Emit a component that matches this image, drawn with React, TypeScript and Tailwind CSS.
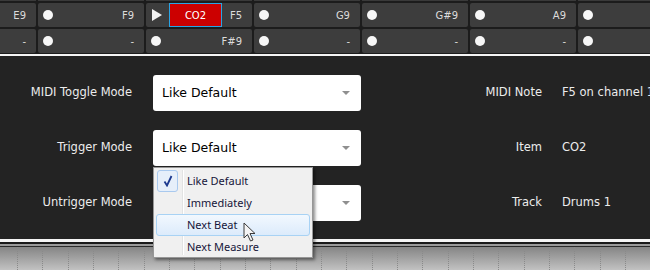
import { ReactNode } from "react";

type Cell = { dot?: "circle" | "play"; label?: string; clip?: boolean; tag?: string };

const row1: Cell[] = [
  { label: "E9" },
  { dot: "circle", label: "F9" },
  { dot: "play", tag: "CO2", label: "F5" },
  { dot: "circle", label: "G9" },
  { dot: "circle", label: "G#9" },
  { dot: "circle", label: "A9" },
  { dot: "circle" },
];

const row2: Cell[] = [
  { label: "-" },
  { dot: "circle", label: "-" },
  { dot: "circle", label: "F#9" },
  { dot: "circle", label: "-" },
  { dot: "circle", label: "-" },
  { dot: "circle", label: "-" },
  { dot: "circle" },
];

function Dot() {
  return <span className="block w-[10px] h-[10px] rounded-full bg-[#f7f7f7] shrink-0" />;
}

function Play() {
  return (
    <svg width="11" height="12" viewBox="0 0 11 12" className="shrink-0">
      <polygon points="0,0 10,6 0,12" fill="#f2f2f2" />
    </svg>
  );
}

function GridRow({ cells }: { cells: Cell[] }) {
  return (
    <div className="flex gap-[2px] ml-[-70px] h-[24px]">
      {cells.map((c, i) => (
        <div
          key={i}
          className="w-[106px] shrink-0 h-full bg-[#3d3d3d] rounded-[2px] flex items-center pl-[5px] pr-[10px]"
        >
          {c.dot === "circle" && <Dot />}
          {c.dot === "play" && (
            <div className="flex items-center h-full ml-[1px]">
              <Play />
              <div className="ml-[6px] w-[53px] h-full bg-[#cc0000] border border-[#2aa4e4] flex items-center justify-center text-white">
                {c.tag}
              </div>
            </div>
          )}
          <span className="ml-auto text-[#dcdcdc]">{c.label}</span>
        </div>
      ))}
    </div>
  );
}

function Chevron() {
  return (
    <svg width="8" height="4" viewBox="0 0 8 4" className="shrink-0">
      <polygon points="0,0 8,0 4,4" fill="#8f8f8f" />
    </svg>
  );
}

function Select({ value, children }: { value: string; children?: ReactNode }) {
  return (
    <div className="relative ml-[21px] w-[208px] h-[36px] shrink-0">
      <div className="w-full h-full bg-white rounded-[3px] flex items-center pl-[9px] pr-[11px] text-[12.5px] text-black">
        <span>{value}</span>
        <span className="ml-auto">
          <Chevron />
        </span>
      </div>
      {children}
    </div>
  );
}

function FormRow({
  label,
  value,
  infoLabel,
  info,
  children,
}: {
  label: string;
  value: string;
  infoLabel: string;
  info: string;
  children?: ReactNode;
}) {
  return (
    <div className="flex items-center h-[36px] text-[11.5px] text-[#ececec]">
      <div className="w-[132px] shrink-0 text-right">{label}</div>
      <Select value={value}>{children}</Select>
      <div className="w-[181px] shrink-0 text-right">{infoLabel}</div>
      <div className="ml-[20px] whitespace-nowrap">{info}</div>
    </div>
  );
}

function Cursor() {
  return (
    <svg width="14" height="20" viewBox="0 0 14 20" className="absolute left-[89px] top-[54px]">
      <path
        d="M1 1 L1 16 L4.5 12.5 L7.5 19 L10 18 L7 11.5 L12 11.5 Z"
        fill="#f4f4f4"
        stroke="#3a3a3a"
        strokeWidth="1"
        strokeLinejoin="round"
      />
    </svg>
  );
}

function Menu() {
  const items = ["Like Default", "Immediately", "Next Beat", "Next Measure"];
  return (
    <div
      className="absolute left-0 top-[37px] w-[160px] h-[91px] bg-[#f0f0f0] border border-[#979797] shadow-[2px_2px_3px_rgba(0,0,0,0.45)] p-[2px] z-10"
      style={{ fontFamily: '"Noto Sans", "Open Sans", sans-serif' }}
    >
      <div className="absolute left-[28px] top-[2px] bottom-[2px] w-[2px] border-l border-[#e2e3e3] bg-white" />
      <div className="relative flex flex-col">
        {items.map((it, i) => (
          <div
            key={it}
            className={
              "relative h-[22px] flex items-center text-[11px] text-[#16163a] rounded-[3px] border " +
              (i === 2
                ? "border-[#a8d2f4] bg-gradient-to-b from-[#f2f8fe] to-[#dcebfb]"
                : "border-transparent")
            }
          >
            {i === 0 && (
              <div className="absolute left-[0px] top-[-1px] w-[21px] h-[22px] rounded-[3px] border border-[#a9c9ee] bg-[#e6effa] flex items-center justify-center">
                <svg width="10" height="12" viewBox="0 0 10 12">
                  <path d="M1.5 6.5 L4 10.5 L8.5 1" fill="none" stroke="#1d3a8f" strokeWidth="1.8" />
                </svg>
              </div>
            )}
            <span className="ml-[30px]">{it}</span>
          </div>
        ))}
      </div>
      <Cursor />
    </div>
  );
}

export default function App() {
  const dots = Array.from({ length: 26 }, (_, i) => i);
  return (
    <div
      className="w-[650px] h-[270px] overflow-hidden bg-[#1c1c1c] flex flex-col"
      style={{ fontFamily: '"DejaVu Sans", Verdana, sans-serif' }}
    >
      <div className="flex flex-col gap-[2px] pb-[1px] text-[10px] overflow-hidden">
        <div className="flex gap-[2px] ml-[-70px] h-[1px]">
          {row1.map((_, i) => (
            <div key={i} className="w-[106px] shrink-0 bg-[#3a3a3a]" />
          ))}
        </div>
        <GridRow cells={row1} />
        <GridRow cells={row2} />
      </div>
      <div className="h-[2px] bg-[#f4f4f4]" />
      <div className="h-[183px] bg-[#232323] pt-[19px] flex flex-col gap-[19px]">
        <FormRow label="MIDI Toggle Mode" value="Like Default" infoLabel="MIDI Note" info="F5 on channel 1" />
        <FormRow label="Trigger Mode" value="Like Default" infoLabel="Item" info="CO2">
          <Menu />
        </FormRow>
        <FormRow label="Untrigger Mode" value="Like Default" infoLabel="Track" info="Drums 1" />
      </div>
      <div className="h-[3px] bg-[#f5f5f5]" />
      <div className="h-[2px] bg-[#1a1a1a]" />
      <div className="h-[2px] bg-[#9a9a9a]" />
      <div className="h-[1px] bg-[#2a2a2a]" />
      <div className="flex-1 bg-gradient-to-b from-[#858585] to-[#c2c2c2] flex pl-[17px]">
        {dots.map((i) => (
          <div key={i} className="w-[25.33px] shrink-0 border-l border-dotted border-[#8a8a8a]" />
        ))}
      </div>
    </div>
  );
}
